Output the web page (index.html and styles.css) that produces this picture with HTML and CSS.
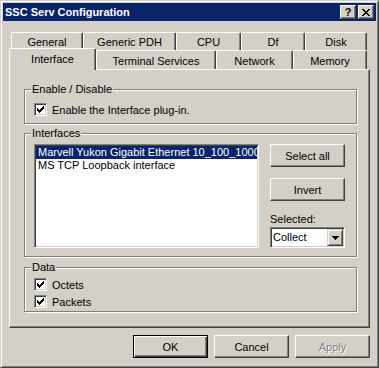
FILE: index.html
```html
<!DOCTYPE html>
<html lang="en">
  <head>
    <meta charset="UTF-8" />
    <title>SSC Serv Configuration</title>
    <link rel="stylesheet" href="styles.css">
  </head>
  <body>
    <div class="window">
      <div class="titlebar">
        <span class="title">SSC Serv Configuration</span>
        <span class="caption-btn">?</span>
        <span class="caption-btn">
          <svg width="8" height="7" viewBox="0 0 8 7" shape-rendering="crispEdges">
            <path d="M0 0h2v1h-2zM6 0h2v1h-2zM1 1h2v1h-2zM5 1h2v1h-2zM2 2h4v1h-4zM3 3h2v1h-2zM2 4h4v1h-4zM1 5h2v1h-2zM5 5h2v1h-2zM0 6h2v1h-2zM6 6h2v1h-2z" fill="#000"/>
          </svg>
        </span>
      </div>

      <div class="tabs">
        <div class="tab-row row-back">
          <div class="tab tab-general">General</div>
          <div class="tab tab-pdh">Generic PDH</div>
          <div class="tab tab-cpu">CPU</div>
          <div class="tab tab-df">Df</div>
          <div class="tab tab-disk">Disk</div>
        </div>
        <div class="tab-row row-front">
          <div class="tab tab-iface active">Interface</div>
          <div class="tab tab-term">Terminal Services</div>
          <div class="tab tab-net">Network</div>
          <div class="tab tab-mem">Memory</div>
        </div>

        <div class="panel">
          <!-- Enable / Disable -->
          <div class="group group-enable">
            <div class="group-title">Enable / Disable</div>
            <div class="check-row first">
              <span class="check">
                <svg width="7" height="7" viewBox="0 0 7 7" shape-rendering="crispEdges"><path d="M0 2h1v3h-1zM1 3h1v3h-1zM2 4h1v3h-1zM3 3h1v3h-1zM4 2h1v3h-1zM5 1h1v3h-1zM6 0h1v3h-1z" fill="#000"/></svg>
              </span>
              <span>Enable the Interface plug-in.</span>
            </div>
          </div>

          <!-- Interfaces -->
          <div class="group group-ifaces">
            <div class="group-title">Interfaces</div>
            <div class="iface-body">
              <div class="listbox">
                <div class="list-item selected">Marvell Yukon Gigabit Ethernet 10_100_1000BT Controller</div>
                <div class="list-item">MS TCP Loopback interface</div>
              </div>
              <div class="side">
                <button class="btn" type="button">Select all</button>
                <button class="btn invert" type="button">Invert</button>
                <div class="side-label">Selected:</div>
                <div class="combo">
                  <span class="combo-value">Collect</span>
                  <span class="combo-btn">
                    <svg width="7" height="4" viewBox="0 0 7 4" shape-rendering="crispEdges"><path d="M0 0h7v1h-7zM1 1h5v1h-5zM2 2h3v1h-3zM3 3h1v1h-1z" fill="#000"/></svg>
                  </span>
                </div>
              </div>
            </div>
          </div>

          <!-- Data -->
          <div class="group group-data">
            <div class="group-title">Data</div>
            <div class="check-row first">
              <span class="check">
                <svg width="7" height="7" viewBox="0 0 7 7" shape-rendering="crispEdges"><path d="M0 2h1v3h-1zM1 3h1v3h-1zM2 4h1v3h-1zM3 3h1v3h-1zM4 2h1v3h-1zM5 1h1v3h-1zM6 0h1v3h-1z" fill="#000"/></svg>
              </span>
              <span>Octets</span>
            </div>
            <div class="check-row">
              <span class="check">
                <svg width="7" height="7" viewBox="0 0 7 7" shape-rendering="crispEdges"><path d="M0 2h1v3h-1zM1 3h1v3h-1zM2 4h1v3h-1zM3 3h1v3h-1zM4 2h1v3h-1zM5 1h1v3h-1zM6 0h1v3h-1z" fill="#000"/></svg>
              </span>
              <span>Packets</span>
            </div>
          </div>
        </div>
      </div>

      <div class="buttons">
        <button class="btn default" type="button">OK</button>
        <button class="btn" type="button">Cancel</button>
        <button class="btn disabled" type="button">Apply</button>
      </div>
    </div>
  </body>
</html>
```

FILE: styles.css
```css
* {
  box-sizing: border-box;
}
body {
  margin: 0;
  font: 11px "Liberation Sans", Arial, sans-serif;
  color: #000;
  background: #d4d0c8;
}

/* window frame */
.window {
  width: 379px;
  height: 368px;
  border: 1px solid;
  border-color: #d4d0c8 #404040 #404040 #d4d0c8;
  box-shadow: inset 1px 1px #fff, inset -1px -1px #808080;
  padding: 2px;
  background: #d4d0c8;
  display: flex;
  flex-direction: column;
}
.titlebar {
  height: 18px;
  flex: none;
  background: #0a246a;
  color: #fff;
  display: flex;
  align-items: center;
  padding: 0 2px;
}
.title {
  flex: 1;
  font-weight: bold;
}
.caption-btn {
  width: 16px;
  height: 14px;
  margin-left: 2px;
  background: #d4d0c8;
  color: #000;
  border: 1px solid;
  border-color: #fff #404040 #404040 #fff;
  box-shadow: inset -1px -1px #808080;
  display: flex;
  align-items: center;
  justify-content: center;
  font-weight: bold;
  line-height: 1;
}

/* tabs */
.tabs {
  margin: 11px 6px 0 6px;
}
.tab-row {
  display: flex;
}
.row-back {
  height: 18px;
  padding-left: 2px;
}
.row-front {
  height: 19px;
}
.tab {
  display: flex;
  align-items: center;
  justify-content: center;
  background: #d4d0c8;
  border: 1px solid;
  border-bottom: 0;
  border-color: #fff #404040 #404040 #fff;
  border-radius: 2px 2px 0 0;
  box-shadow: inset -1px 0 #808080;
  white-space: nowrap;
  padding-top: 1px;
}
.tab-general { width: 72px; }
.tab-pdh { width: 93px; }
.tab-cpu { width: 65px; }
.tab-df { width: 64px; }
.tab-disk { width: 62px; }
.tab-iface { width: 87px; }
.tab-term { width: 120px; }
.tab-net { width: 77px; }
.tab-mem { width: 74px; }
.tab.active {
  height: 22px;
  margin: -2px 0 -1px 0;
  padding-top: 0;
  padding-bottom: 2px;
  position: relative;
  z-index: 1;
}
.panel {
  height: 259px;
  border: 1px solid;
  border-color: #fff #404040 #404040 #fff;
  box-shadow: inset -1px -1px #808080;
  padding: 19px 12px 0 14px;
}

/* group boxes */
.group {
  border: 1px solid #808080;
  box-shadow: inset 1px 1px #fff, 1px 1px #fff;
  padding: 0 9px;
}
.group-title {
  width: fit-content;
  margin: -7px 0 0 -3px;
  padding: 0 1px;
  background: #d4d0c8;
  line-height: 13px;
}
.group-enable {
  height: 35px;
}
.group-ifaces {
  height: 124px;
  margin-top: 9px;
}
.group-data {
  height: 45px;
  margin-top: 10px;
}
.check-row {
  display: flex;
  align-items: center;
  gap: 5px;
  height: 13px;
  margin-top: 4px;
}
.group-enable .check-row.first {
  margin-top: 7px;
}
.check {
  width: 13px;
  height: 13px;
  border: 1px solid;
  border-color: #808080 #fff #fff #808080;
  box-shadow: inset 1px 1px #404040, inset -1px -1px #d4d0c8;
  background: #fff;
  display: flex;
  align-items: center;
  justify-content: center;
}

/* interfaces list */
.iface-body {
  display: flex;
  gap: 11px;
  margin-top: 4px;
}
.listbox {
  width: 225px;
  height: 104px;
  border: 1px solid;
  border-color: #808080 #fff #fff #808080;
  box-shadow: inset 1px 1px #404040, inset -1px -1px #d4d0c8;
  background: #fff;
  padding: 1px;
  overflow: hidden;
}
.list-item {
  height: 13px;
  line-height: 13px;
  padding-left: 2px;
  white-space: nowrap;
  overflow: hidden;
}
.list-item.selected {
  background: #0a246a;
  color: #fff;
}
.side {
  width: 75px;
  display: flex;
  flex-direction: column;
}
.side .invert {
  margin-top: 11px;
}
.side-label {
  margin-top: 12px;
  line-height: 13px;
}
.combo {
  height: 21px;
  margin-top: 1px;
  border: 1px solid;
  border-color: #808080 #fff #fff #808080;
  box-shadow: inset 1px 1px #404040, inset -1px -1px #d4d0c8;
  background: #fff;
  padding: 1px;
  display: flex;
}
.combo-value {
  flex: 1;
  padding-left: 1px;
  line-height: 17px;
}
.combo-btn {
  width: 16px;
  height: 17px;
  border: 1px solid;
  border-color: #d4d0c8 #404040 #404040 #d4d0c8;
  box-shadow: inset 1px 1px #fff, inset -1px -1px #808080;
  background: #d4d0c8;
  display: flex;
  align-items: center;
  justify-content: center;
}

/* push buttons */
.btn {
  width: 75px;
  height: 23px;
  flex: none;
  padding: 0;
  font: inherit;
  color: #000;
  background: #d4d0c8;
  border: 1px solid;
  border-color: #fff #404040 #404040 #fff;
  box-shadow: inset -1px -1px #808080;
  display: flex;
  align-items: center;
  justify-content: center;
}
.btn.default {
  border-color: #000;
  box-shadow: inset 1px 1px #fff, inset -1px -1px #404040, inset -2px -2px #808080;
}
.btn.disabled {
  color: #808080;
  text-shadow: 1px 1px #fff;
}
.buttons {
  display: flex;
  justify-content: flex-end;
  gap: 6px;
  margin-top: 7px;
  padding-right: 6px;
}
```
